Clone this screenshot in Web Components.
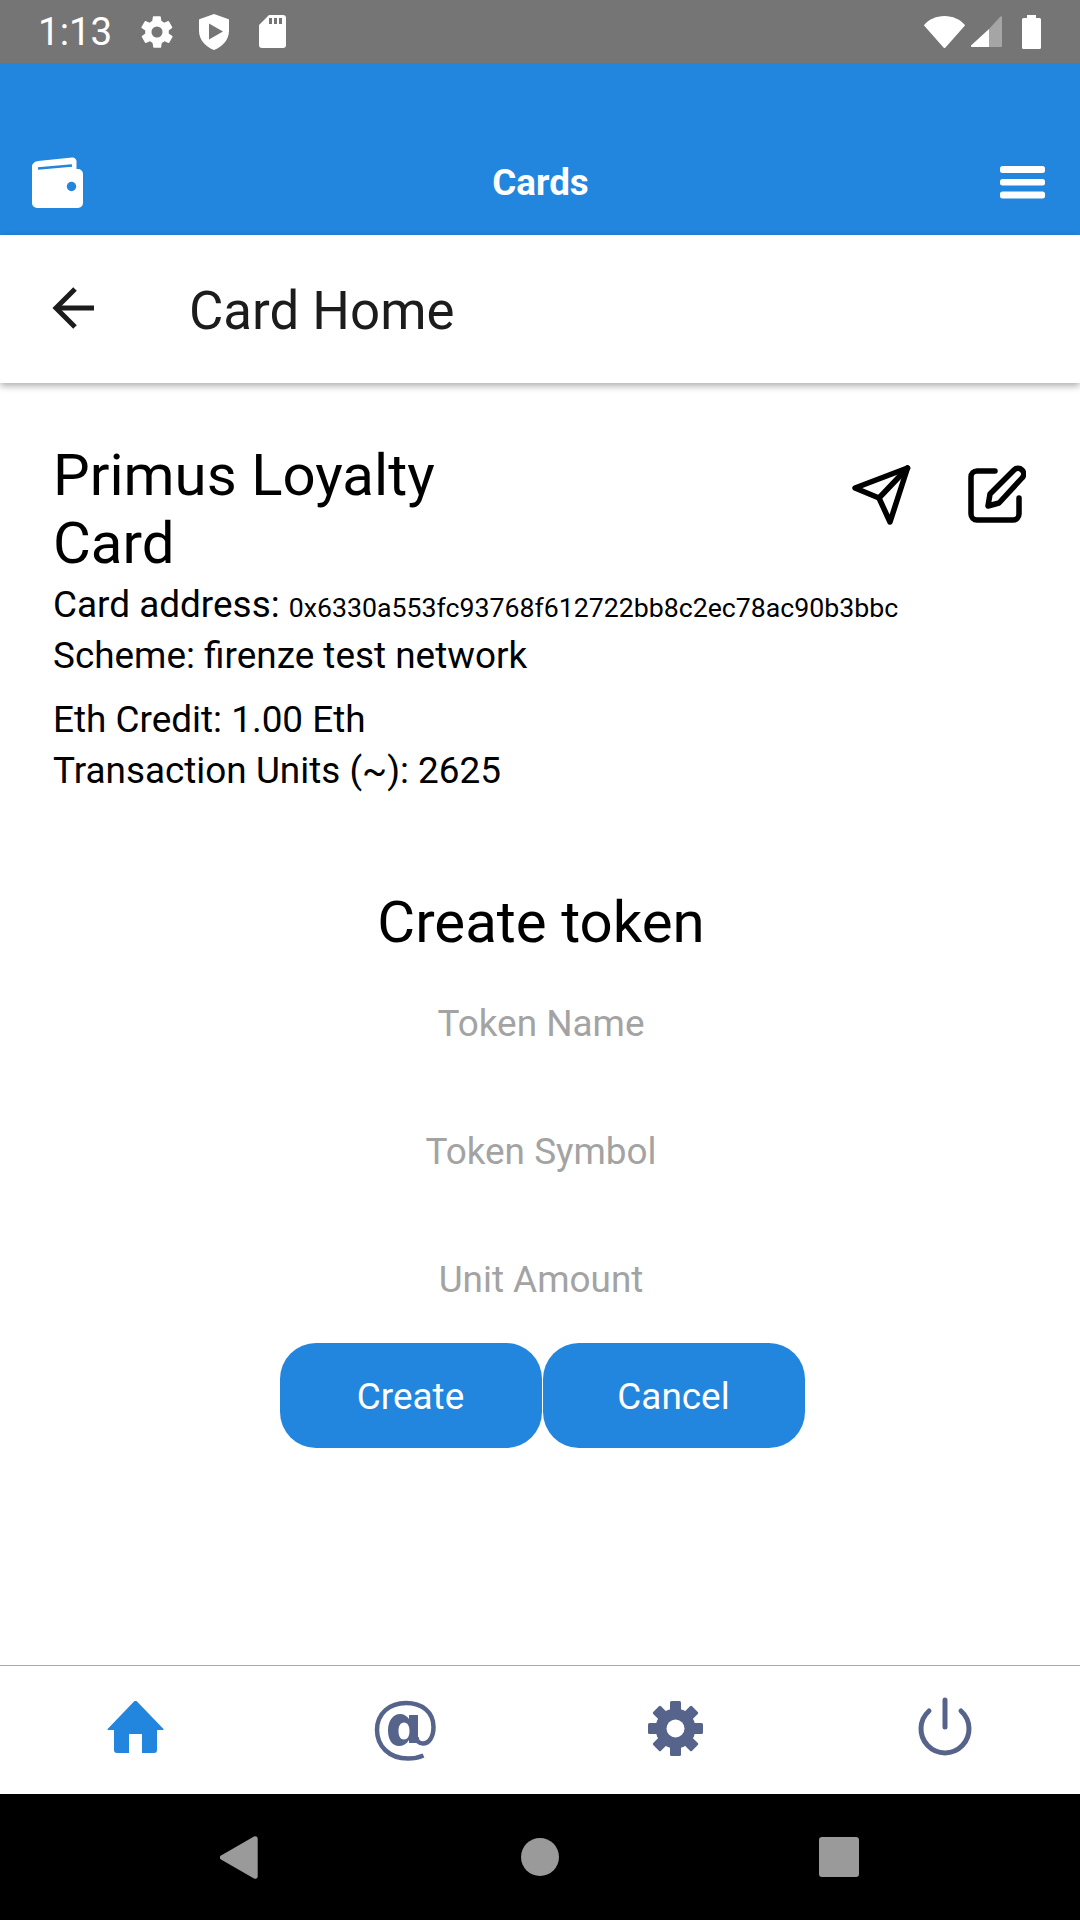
<!DOCTYPE html>
<html>
<head>
<meta charset="utf-8">
<style>
  html, body { margin: 0; padding: 0; background: #fff; }
  body { width: 1080px; height: 1920px; font-family: Roboto, sans-serif; }
  #app { display: flex; flex-direction: column; height: 1920px; }
</style>
</head>
<body>
<div id="app">
  <status-bar time="1:13"></status-bar>
  <app-header title="Cards"></app-header>
  <sub-header title="Card Home"></sub-header>
  <card-info>
    <span slot="name">Primus Loyalty Card</span>
    <span slot="address">0x6330a553fc93768f612722bb8c2ec78ac90b3bbc</span>
    <span slot="scheme">Scheme: firenze test network</span>
    <span slot="credit">Eth Credit: 1.00 Eth</span>
    <span slot="units">Transaction Units (~): 2625</span>
  </card-info>
  <token-form>
    <token-field>Token Name</token-field>
    <token-field>Token Symbol</token-field>
    <token-field>Unit Amount</token-field>
    <round-button slot="actions">Create</round-button>
    <round-button slot="actions">Cancel</round-button>
  </token-form>
  <bottom-nav></bottom-nav>
  <system-nav></system-nav>
</div>

<script>
class StatusBar extends HTMLElement {
    connectedCallback() {
        const root = this.attachShadow({ mode: "open" });
        root.innerHTML = `
        <style>
            :host { display: flex; align-items: center; height: 63px; background: #757575; color: #fff; flex: none; padding: 0 39px 0 38px; box-sizing: border-box; }
            .time { font-size: 38.5px; width: 100px; line-height: 63px; margin-top: -1px; }
            svg { display: block; fill: #fff; }
            .left { display: flex; align-items: center; gap: 23px; }
            .right { display: flex; align-items: center; margin-left: auto; }
        </style>
        <div class="time">${this.getAttribute("time")}</div>
        <div class="left">
            <svg width="38" height="38" viewBox="0 0 24 24"><path d="M19.4 13a7.5 7.5 0 0 0 0-2l2.1-1.6a.5.5 0 0 0 .1-.6l-2-3.5a.5.5 0 0 0-.6-.2l-2.5 1a7.3 7.3 0 0 0-1.7-1l-.4-2.6a.5.5 0 0 0-.5-.5h-4a.5.5 0 0 0-.5.4l-.4 2.7a7.7 7.7 0 0 0-1.7 1l-2.5-1a.5.5 0 0 0-.6.2l-2 3.5a.5.5 0 0 0 .1.6L4.6 11a7.900 7.900 0 0 0 0 2l-2.100 1.600a.5.5 0 0 0-.1.600l2 3.500a.5.5 0 0 0 .6.200l2.500-1c.5.400 1.100.700 1.700 1l.4 2.600a.5.5 0 0 0 .5.500h4a.5.5 0 0 0 .5-.4l.4-2.700a7.700 7.700 0 0 0 1.700-1l2.500 1a.5.5 0 0 0 .6-.2l2-3.500a.5.5 0 0 0-.1-.6zM12 15.500a3.500 3.500 0 1 1 0-7 3.500 3.500 0 0 1 0 7z"/></svg>
            <svg width="30" height="36" viewBox="0 0 30 36"><path fill-rule="evenodd" d="M15 0 L29 5 a1 1 0 0 1 1 1 V17 C30 26 23 33 15 36 C7 33 0 26 0 17 V6 a1 1 0 0 1 1-1 Z M10 9.500 V25.500 L24 17.500 Z"/></svg>
            <svg width="27" height="33" viewBox="0 0 27 33" style="margin-left:7px"><path fill-rule="evenodd" d="M10 0 H24 a3 3 0 0 1 3 3 V30 a3 3 0 0 1-3 3 H3 a3 3 0 0 1-3-3 V10 Z M10 3 V9 H13 V3 Z M15 3 V9 H18 V3 Z M20 3 V9 H23 V3 Z"/></svg>
        </div>
        <div class="right">
            <svg width="41" height="32" viewBox="0 0 41 32"><path d="M.5 8.500 C5 3.500 12 0 20.500 0 S36 3.500 40.500 8.500 a1 1 0 0 1 0 1.500 L21.500 31.500 a1.300 1.300 0 0 1-2 0 L.5 10 a1 1 0 0 1 0-1.500z"/></svg>
            <svg width="31" height="32" viewBox="0 0 31 32" style="margin-left:6px"><path fill="#fff" fill-opacity=".35" d="M18 13 L29 1 a1 1 0 0 1 2 1 V30 a1 1 0 0 1-1 1 H18 Z"/><path d="M18 13 V31 H1 a1 1 0 0 1-1-1.500 Z"/></svg>
            <svg width="19" height="34" viewBox="0 0 19 34" style="margin-left:20px"><path d="M5 0 H14 V3 H17.500 a1.500 1.500 0 0 1 1.500 1.500 V32.500 a1.500 1.500 0 0 1-1.500 1.500 H1.500 A1.500 1.500 0 0 1 0 32.500 V4.500 A1.500 1.500 0 0 1 1.500 3 H5 Z"/></svg>
        </div>
        `;
    }
}

class AppHeader extends HTMLElement {
    connectedCallback() {
        const root = this.attachShadow({ mode: "open" });
        root.innerHTML = `
        <style>
            :host { display: flex; align-items: center; justify-content: space-between; height: 172px; background: #2285de; flex: none; padding: 66px 35px 0 32px; box-sizing: border-box; color: #fff; }
            .title { font-size: 36.75px; font-weight: 700; margin-right: 2px; }
            svg { display: block; }
        </style>
        <svg width="51" height="51" viewBox="0 0 51 51"><path fill="#fff" d="M0 12 V46 a5 5 0 0 0 5 5 H46 a5 5 0 0 0 5-5 V17 a5 5 0 0 0-5-5 H44.500 V5 a4 4 0 0 0-4.500-4.500 L6 4 A6.500 6.500 0 0 0 0 12z"/><path fill="none" stroke="#2285de" stroke-width="2.500" d="M6 11.500 L40 8.500"/><circle cx="39.500" cy="29.500" r="4.700" fill="#2285de"/></svg>
        <div class="title">${this.getAttribute("title")}</div>
        <svg width="45" height="33" viewBox="0 0 45 33" fill="#fff"><rect width="45" height="7" rx="2.500"/><rect y="13" width="45" height="6.500" rx="2.500"/><rect y="25.500" width="45" height="7" rx="2.500"/></svg>
        `;
    }
}

class SubHeader extends HTMLElement {
    connectedCallback() {
        const root = this.attachShadow({ mode: "open" });
        root.innerHTML = `
        <style>
            :host { display: flex; align-items: center; height: 148px; background: #fff; flex: none; padding: 0 0 0 52px; box-sizing: border-box; color: #1c1c1c; box-shadow: 0 3px 7px rgba(0,0,0,.32); position: relative; }
            svg { display: block; margin-top: -2px; }
            .title { font-size: 52.8px; margin-left: 95px; margin-top: 4px; }
        </style>
        <svg width="42" height="42" viewBox="0 0 42 42" fill="none" stroke="#1c1c1c" stroke-width="5"><path d="M42 21 H4"/><path d="M23 2 L4 21 L23 40"/></svg>
        <div class="title">${this.getAttribute("title")}</div>
        `;
    }
}

class CardInfo extends HTMLElement {
    connectedCallback() {
        const root = this.attachShadow({ mode: "open" });
        root.innerHTML = `
        <style>
            :host { display: block; flex: none; padding: 58px 54px 0 53px; color: #000; }
            .top { display: flex; align-items: flex-start; justify-content: space-between; }
            .name { font-size: 58.2px; line-height: 68px; width: 480px; }
            .icons { display: flex; gap: 56px; padding-top: 24px; }
            svg { display: block; }
            .line { font-size: 36.9px; line-height: 51px; }
            .first { line-height: 43px; margin-top: 6px; }
            .addr { font-size: 26.7px; }
            .gap { margin-top: 13px; }
        </style>
        <div class="top">
            <div class="name"><slot name="name"></slot></div>
            <div class="icons">
                <svg width="60" height="60" viewBox="0 0 60 60" fill="none" stroke="#000" stroke-width="5.500" stroke-linejoin="round" stroke-linecap="round"><path d="M55.500 3 L3 23 L27 33 L38 57 Z"/><path d="M55.500 3 L27 33"/></svg>
                <svg width="58" height="60" viewBox="0 0 58 60" fill="none" stroke="#000" stroke-width="5.500" stroke-linejoin="round" stroke-linecap="round"><path d="M27 6 H9 a6 6 0 0 0-6 6 V49 a6 6 0 0 0 6 6 H45 a6 6 0 0 0 6-6 V33"/><path d="M20 41 L22 29 L46 5 a5.500 5.500 0 0 1 8 8 L31 38 Z"/></svg>
            </div>
        </div>
        <div class="line first">Card address: <span class="addr"><slot name="address"></slot></span></div>
        <div class="line"><slot name="scheme"></slot></div>
        <div class="line gap"><slot name="credit"></slot></div>
        <div class="line"><slot name="units"></slot></div>
        `;
    }
}

class TokenField extends HTMLElement {
    connectedCallback() {
        const root = this.attachShadow({ mode: "open" });
        root.innerHTML = `
        <style>
            :host { display: block; height: 128px; line-height: 100px; text-align: center; color: #a3a3a3; font-size: 36.9px; }
        </style>
        <slot></slot>
        `;
    }
}

class RoundButton extends HTMLElement {
    connectedCallback() {
        const root = this.attachShadow({ mode: "open" });
        root.innerHTML = `
        <style>
            :host { display: flex; align-items: center; justify-content: center; width: 262px; height: 105px; border-radius: 36px; background: #2285de; color: #fff; font-size: 36.9px; padding-top: 2px; box-sizing: border-box; }
        </style>
        <slot></slot>
        `;
    }
}

class TokenForm extends HTMLElement {
    connectedCallback() {
        const root = this.attachShadow({ mode: "open" });
        root.innerHTML = `
        <style>
            :host { display: block; flex: 1; padding: 91px 0 0 2px; }
            h2 { margin: 0 0 17px; font-weight: 400; font-size: 58.2px; line-height: 70px; text-align: center; color: #000; }
            .actions { display: flex; justify-content: center; gap: 1px; margin-top: -15px; padding-left: 2px; }
        </style>
        <h2>Create token</h2>
        <slot></slot>
        <div class="actions"><slot name="actions"></slot></div>
        `;
    }
}

class BottomNav extends HTMLElement {
    connectedCallback() {
        const root = this.attachShadow({ mode: "open" });
        let teeth = "";
        for (let a = 0; a < 360; a += 45) {
            teeth += `<rect x="22" y="0" width="11" height="14" rx="1.500" transform="rotate(${a} 27.500 27.500)"/>`;
        }
        root.innerHTML = `
        <style>
            :host { display: grid; grid-template-columns: repeat(4, 270px); height: 129px; flex: none; border-top: 1px solid #a9a9a9; box-sizing: border-box; background: #fff; }
            .item { display: flex; align-items: center; justify-content: center; }
            svg { display: block; }
        </style>
        <div class="item"><svg width="57" height="52" viewBox="0 0 57 52" style="margin-top:-6px"><path fill="#2285de" d="M27 .6 a2 2 0 0 1 3 0 L56.500 28 a.6.6 0 0 1-.4 1 H50 V49 a3 3 0 0 1-3 3 H35 V33 H22 V52 H10 a3 3 0 0 1-3-3 V29 H1 a.6.6 0 0 1-.4-1 Z"/></svg></div>
        <div class="item"><svg width="90" height="80" viewBox="0 0 90 80" style="margin-top:1px"><path fill="none" stroke="#56648c" stroke-width="4.500" d="M63.500 64.500 C60 66 55 67.500 48 67.500 C29 67.500 17 55 17 39 C17 22 30 12 46 12 C62 12 73.500 21 73.500 36 C73.500 46 69 52.500 63 52.500 C59 52.500 56.500 50 56.500 46"/><path fill="#56648c" fill-rule="evenodd" d="M58 24 V52 H49 V49 C46.500 53 43 55 39 55 C32 55 28 48.500 28 39.500 C28 30 33 23 40 23 C44 23 47 25 49 28 V24 Z M44 31.500 C40.500 31.500 38.500 35 38.500 40 C38.500 45 40.500 48.500 44 48.500 C47.500 48.500 49.500 45 49.500 40 C49.500 35 47.500 31.500 44 31.500 Z"/></svg></div>
        <div class="item"><svg width="55" height="55" viewBox="0 0 55 55" fill="#56648c" style="margin-top:-4px">${teeth}<circle cx="27.500" cy="27.500" r="20"/><circle cx="27.500" cy="27.500" r="9" fill="#fff"/></svg></div>
        <div class="item"><svg width="54" height="60" viewBox="0 0 54 60" fill="none" stroke="#56648c" stroke-width="5" stroke-linecap="round" style="margin-top:-6px"><path d="M27 3 V30"/><path d="M11 14 A24 24 0 1 0 43 14"/></svg></div>
        `;
    }
}

class SystemNav extends HTMLElement {
    connectedCallback() {
        const root = this.attachShadow({ mode: "open" });
        root.innerHTML = `
        <style>
            :host { display: flex; align-items: center; height: 126px; flex: none; background: #000; }
            svg { display: block; }
        </style>
        <svg width="38" height="43" viewBox="0 0 38 43" style="margin-left:220px"><path fill="#9a9a9a" d="M1 19.500 L34 .5 a2.500 2.500 0 0 1 3.700 2 V40.500 a2.500 2.500 0 0 1-3.700 2 L1 23.500 a2.300 2.300 0 0 1 0-4z"/></svg>
        <svg width="38" height="38" viewBox="0 0 38 38" style="margin-left:263px"><circle cx="19" cy="19" r="19" fill="#9a9a9a"/></svg>
        <svg width="40" height="40" viewBox="0 0 40 40" style="margin-left:260px"><rect width="40" height="40" rx="3" fill="#9a9a9a"/></svg>
        `;
    }
}

customElements.define("status-bar", StatusBar);
customElements.define("app-header", AppHeader);
customElements.define("sub-header", SubHeader);
customElements.define("card-info", CardInfo);
customElements.define("token-field", TokenField);
customElements.define("round-button", RoundButton);
customElements.define("token-form", TokenForm);
customElements.define("bottom-nav", BottomNav);
customElements.define("system-nav", SystemNav);
</script>
</body>
</html>
